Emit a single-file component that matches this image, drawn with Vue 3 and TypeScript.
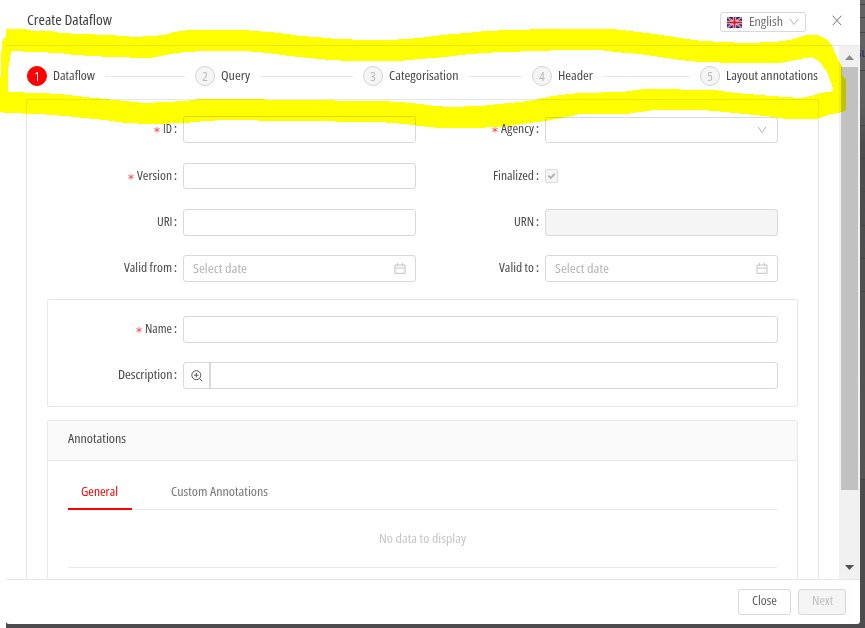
<script setup lang="ts">
interface Step { n: number; title: string; w: number }
interface Field { label: string; w: number; required?: boolean; kind: 'text' | 'select' | 'check' | 'disabled' | 'date'; h: number }

const steps: Step[] = [
  { n: 1, title: 'Dataflow', w: 42 },
  { n: 2, title: 'Query', w: 29 },
  { n: 3, title: 'Categorisation', w: 69.5 },
  { n: 4, title: 'Header', w: 35 },
  { n: 5, title: 'Layout annotations', w: 92 },
]

const fields: Field[] = [
  { label: 'ID', w: 9, required: true, kind: 'text', h: 27 },
  { label: 'Agency', w: 33, required: true, kind: 'select', h: 26 },
  { label: 'Version', w: 35, required: true, kind: 'text', h: 26 },
  { label: 'Finalized', w: 41, kind: 'check', h: 26 },
  { label: 'URI', w: 15.5, kind: 'text', h: 27 },
  { label: 'URN', w: 20, kind: 'disabled', h: 27 },
  { label: 'Valid from', w: 48, kind: 'date', h: 27 },
  { label: 'Valid to', w: 35, kind: 'date', h: 27 },
]

// Condenses a text run to the given width in pixels.
const vFit = {
  mounted(el: HTMLElement, binding: { value: number }) {
    const natural = el.getBoundingClientRect().width
    el.style.transform = `scaleX(${binding.value / natural})`
    el.style.marginRight = `${binding.value - natural}px`
  },
}
</script>

<template>
  <div class="page">
    <div class="backdrop">
      <svg class="rows" viewBox="0 0 6 628" width="6" height="628">
        <path d="M0 4.5H6M0 17.5H6M0 32.5H6M0 70.5H6M0 125.5H6M0 158.5H6M0 191.5H6M0 225.5H6M0 258.5H6M0 291.5H6M0 479.5H6" />
      </svg>
      <span class="behind">su</span>
    </div>
    <div class="modal">
      <header class="head">
        <h1><span v-fit="85" class="t">Create Dataflow</span></h1>
        <button class="lang">
          <svg class="flag" viewBox="0 0 15 11" width="15" height="11">
            <rect width="15" height="11" fill="#12246b" />
            <path d="M0 0L15 11M15 0L0 11" stroke="#e8e4ee" stroke-width="1.7" />
            <path d="M0 0L15 11M15 0L0 11" stroke="#d8203a" stroke-width=".7" />
            <path d="M7.5 0V11M0 5.5H15" stroke="#fff" stroke-width="3.4" />
            <path d="M7.5 0V11M0 5.5H15" stroke="#d8142e" stroke-width="2" />
          </svg>
          <span v-fit="34" class="t">English</span>
          <svg class="chev" viewBox="0 0 10 8" width="10" height="8"><path d="M1 1L5 6.5L9 1" /></svg>
        </button>
        <svg class="x" viewBox="0 0 10 11" width="10" height="11"><path d="M.7 .7L9.3 10.3M9.3 .7L.7 10.3" /></svg>
      </header>

      <main class="body">
        <div class="content">
          <nav class="steps">
            <div v-for="s in steps" :key="s.n" class="step" :class="{ active: s.n === 1 }">
              <span class="circle">{{ s.n }}</span>
              <span v-fit="s.w" class="t title">{{ s.title }}</span>
              <i v-if="s.n < 5" class="tail"></i>
            </div>
          </nav>

          <section class="panel">
            <div class="grid">
              <template v-for="f in fields" :key="f.label">
                <label class="label">
                  <b v-if="f.required">*</b>
                  <span v-fit="f.w" class="t">{{ f.label }}</span><em>:</em>
                </label>
                <div v-if="f.kind === 'check'" class="check">
                  <svg viewBox="0 0 13 14" width="13" height="14"><path d="M3.4 6.7L5.7 9L9.8 4.9" /></svg>
                </div>
                <div v-else class="input" :class="f.kind" :style="{ height: f.h + 'px' }">
                  <template v-if="f.kind === 'date'">
                    <span v-fit="54" class="t hint">Select date</span>
                    <svg class="cal" viewBox="0 0 12 11" width="12" height="11">
                      <path d="M1 2H11V10.3H1ZM1 5H11M3.5 0V3M8.5 0V3" />
                    </svg>
                  </template>
                  <svg v-if="f.kind === 'select'" class="chev" viewBox="0 0 10 8" width="10" height="8"><path d="M1 1L5 6.5L9 1" /></svg>
                </div>
              </template>
            </div>

            <div class="box names">
              <label class="label"><b>*</b><span v-fit="27" class="t">Name</span><em>:</em></label>
              <div class="input tall"></div>
              <label class="label"><span v-fit="54.5" class="t">Description</span><em>:</em></label>
              <div class="input tall">
                <span class="addon">
                  <svg viewBox="0 0 12 12" width="12" height="12">
                    <circle cx="5.3" cy="5.2" r="4.5" />
                    <path d="M8.5 8.5L11.3 11.4M3 5.2H7.6M5.3 3V7.5" />
                  </svg>
                </span>
              </div>
            </div>

            <div class="box annotations">
              <div class="caption"><span v-fit="58" class="t">Annotations</span></div>
              <div class="tabs">
                <div class="tab on"><span v-fit="37" class="t">General</span></div>
                <div class="tab"><span v-fit="97" class="t">Custom Annotations</span></div>
              </div>
              <div class="empty"><span v-fit="87" class="t">No data to display</span></div>
            </div>
          </section>
        </div>
        <aside class="scroll">
          <svg viewBox="0 0 9 5" width="9" height="5"><path d="M0 5L4.5 0L9 5Z" fill="#8b8b8b" /></svg>
          <div class="thumb"></div>
          <svg class="down" viewBox="0 0 9 5" width="9" height="5"><path d="M0 0H9L4.5 5Z" fill="#505050" /></svg>
        </aside>
      </main>

      <footer class="foot">
        <button class="btn"><span v-fit="25" class="t">Close</span></button>
        <button class="btn off"><span v-fit="21" class="t">Next</span></button>
      </footer>
    </div>

    <svg class="marker" viewBox="0 0 865 628" width="865" height="628" shape-rendering="crispEdges">
      <path
        fill="#ff0"
        fill-rule="evenodd"
        d="M6 29H25L33 31H50L60 33L80 34L110 35L135 37L150 36L165 35L170 33L180 31L190 30H245L255 31L280 33L300 36L315 37L338 39L365 40H390L405 39L420 38L435 36L452 34L468 33L485 31L510 30L550 29H612L630 31L655 34L680 38L702 41L745 43L775 42L790 40L800 37L807 35H818L828 40L832 46L836 55L842 67L842 76L846 80V110L842 112L828 115L820 118L815 119H787L765 116L745 114L715 111L700 110H655L640 112L625 114H580L572 116L560 118L545 121L530 123L515 125L500 127L470 128H440L420 126L405 124L380 122L290 121L225 120L205 121L185 123L150 124L125 123L105 120L85 118L65 116L40 114L5 113L0 112V95L1 60L2 42L4 38L6 37Z
           M11 51L35 52L60 53L75 55L110 57L150 58L170 54L185 52L205 51H245L268 53L290 56L310 58L330 60L350 61H398L420 59L445 57L470 54L500 52L540 51L560 50H600L615 52L640 54L660 57L680 60L700 62L740 63H780L790 61L800 59L812 57L820 62L827 72L833 88V91L828 92L820 93L812 96L800 98L785 97L760 95L735 93L715 90L645 89L622 92L580 93L560 95L548 97L535 100L520 102L500 104L480 106L450 107L435 106L420 104L400 102L380 101L290 100L240 99H200L185 101L165 102L145 103L125 101L105 99L85 97L60 94L40 93L8 92V68L10 60Z"
      />
    </svg>
  </div>
</template>

<style>
body { margin: 0; background: #fff; overflow: hidden; }
</style>

<style scoped>
* { box-sizing: border-box; }
.page {
  position: relative; width: 865px; height: 628px; padding-left: 6px; overflow: hidden; background: #fff;
  font: 12.6px/18px "Open Sans", "Noto Sans", sans-serif; font-stretch: 75%; color: #5c5c5c;
}
.backdrop { position: absolute; left: 6px; top: 0; width: 859px; height: 628px; background: linear-gradient(to bottom, #626264, #5f5f61 100px, #4d4b4d 145px, #565454 478px, #4d4b4d 480px); }
.rows { position: absolute; left: 853px; top: 0; }
.rows path { stroke: #454545; stroke-width: 1; }
.behind { position: absolute; left: 851px; top: 43px; font-size: 13px; font-weight: 600; color: #34365c; }
.t { display: inline-block; flex: none; white-space: nowrap; transform-origin: 0 50%; }
.modal { position: relative; display: flex; flex-direction: column; width: 854px; height: 624px; background: #fff; border-radius: 0 0 3px 3px; }
.head { display: flex; flex: none; height: 46px; padding: 0 18px 0 21px; border-bottom: 1px solid #e8e8e8; }
h1 { flex: 1; margin: 11px 0 0; font-size: 14px; font-weight: 400; line-height: 18px; color: #404040; }
button { font: inherit; font-stretch: inherit; color: inherit; background: #fff; border: 1px solid #d9d9d9; border-radius: 3px; padding: 0; }
.lang { display: flex; align-items: center; width: 86px; height: 20px; margin: 12px 26px 0 0; padding-left: 6px; color: #707070; }
.flag { margin-right: 7px; }
.lang .chev { margin-left: 6px; }
.chev path, .x path { fill: none; stroke: #b5b5b5; stroke-width: 1; }
.x { margin-top: 15px; }
.x path { stroke: #757575; }
.body { display: flex; flex: none; height: 533px; overflow: hidden; }
.content { width: 833px; padding: 20px 20px 0; }
.steps { display: grid; grid-template-columns: 168px 168px 169px 168px 119px; height: 20px; margin-left: 1px; color: #484848; }
.step { display: flex; align-items: center; }
.circle { flex: none; width: 20px; height: 20px; margin-right: 6px; border: 1px solid #d4d4d4; border-radius: 50%; background: #f5f5f5; color: #b8b8b8; font-size: 13px; line-height: 18px; text-align: center; }
.active .circle { background: #f00; border-color: #f00; color: #fff; }
.tail { flex: 1; height: 1px; margin: 1px 10px 0; background: #e8e8e8; }
.panel { width: 793px; height: 560px; margin-top: 13px; padding: 16px 20px 0; border: 1px solid #e8e8e8; border-radius: 2px; }
.grid { display: grid; grid-template-columns: 136px 233px 129px 233px; grid-template-rows: 47px 46px 46px 44px; height: 183px; }
.label { display: flex; justify-content: flex-end; height: 25px; padding-right: 6px; line-height: 25px; color: #484848; }
.label b { margin-right: 3px; color: #ff3b40; font: 15px/33px "DejaVu Sans", sans-serif; font-size: 12px; }
.label em { width: 5px; font-style: normal; font-weight: 600; text-align: right; }
.input { display: flex; align-items: center; width: 233px; border: 1px solid #d9d9d9; border-radius: 3px; background: #fff; }
.select { justify-content: flex-end; margin-top: 1px; padding-right: 10px; }
.disabled { background: #f5f5f5; }
.date { justify-content: space-between; padding: 0 9px; }
.hint { color: #b4b4b4; }
.cal path { fill: none; stroke: #c4c4c4; stroke-width: 1; }
.check { width: 13px; height: 14px; margin-top: 6px; border: 1px solid #d9d9d9; border-radius: 2px; background: #f5f5f5; }
.check svg { display: block; margin: -1px; }
.check path { fill: none; stroke: #b0b0b0; stroke-width: 1.8; }
.box { width: 751px; border: 1px solid #e8e8e8; border-radius: 2px; }
.names { display: grid; grid-template-columns: 135px 595px; grid-template-rows: 46px 46px; height: 108px; padding-top: 16px; }
.tall { width: 595px; height: 27px; }
.addon { display: flex; align-items: center; width: 27px; height: 25px; padding-left: 7px; border-right: 2px solid #d9d9d9; }
.addon path, .addon circle { fill: none; stroke: #555; stroke-width: 1; }
.annotations { height: 230px; margin-top: 13px; }
.caption { height: 40px; padding: 9px 20px; border-bottom: 1px solid #e8e8e8; background: #fafafa; color: #484848; }
.tabs { display: flex; height: 49px; margin: 0 20px; border-bottom: 1px solid #e8e8e8; color: #777; }
.tab { height: 49px; margin-right: 26px; padding: 22px 13px 0; }
.on { width: 64px; border-bottom: 2px solid #f00; color: #f00; }
.empty { height: 58px; margin: 0 20px; padding-top: 20px; border-bottom: 1px solid #e8e8e8; color: #c6c6c6; text-align: center; }
.scroll { display: flex; flex-direction: column; align-items: center; width: 21px; height: 533px; padding-top: 9px; background: #f1f1f1; }
.scroll svg { flex: none; }
.thumb { flex: none; width: 17px; height: 423px; margin: 7px 0 75px; background: #c1c1c1; }
.foot { display: flex; flex: 1; justify-content: flex-end; gap: 7px; padding: 9px 14px 0 0; border-top: 1px solid #e8e8e8; }
.btn { display: flex; justify-content: center; align-items: center; width: 53px; height: 26px; padding-bottom: 2px; }
.off { width: 48px; background: #f5f5f5; color: #bfbfbf; }
.marker { position: absolute; left: 0; top: 0; mix-blend-mode: multiply; pointer-events: none; }
</style>
